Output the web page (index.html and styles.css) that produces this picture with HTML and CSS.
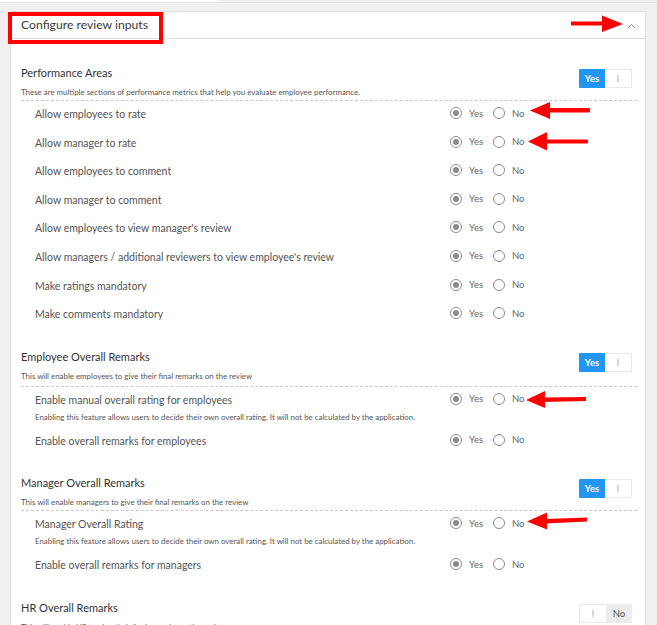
FILE: index.html
```html
<!DOCTYPE html>
<html lang="en">
<head>
<meta charset="utf-8">
<title>Configure review inputs</title>
<link rel="stylesheet" href="styles.css">
</head>
<body>
<div class="topbar"><div class="topbar-white"></div></div>
<div class="card">
  <div class="card-head">
    <h2 class="card-title">Configure review inputs</h2>
    <svg class="chevron" width="9" height="6" viewBox="0 0 9 6"><path d="M1 5 L4.5 1.5 L8 5" fill="none" stroke="#8a8a8a" stroke-width="1"/></svg>
  </div>
  <div class="card-body">
    <section class="group">
      <div class="group-head">
        <div class="group-info">
          <div class="group-title">Performance Areas</div>
          <div class="group-desc">These are multiple sections of performance metrics that help you evaluate employee performance.</div>
        </div>
        <div class="toggle"><span class="t-on">Yes</span><span class="t-off"><i class="t-bar"></i></span></div>
      </div>
      <div class="opts">
        <div class="opt"><div class="opt-text"><div class="opt-label">Allow employees to rate</div></div><div class="radios"><span class="radio"><i class="circle checked"></i>Yes</span><span class="radio"><i class="circle"></i>No</span></div></div>
        <div class="opt"><div class="opt-text"><div class="opt-label">Allow manager to rate</div></div><div class="radios"><span class="radio"><i class="circle checked"></i>Yes</span><span class="radio"><i class="circle"></i>No</span></div></div>
        <div class="opt"><div class="opt-text"><div class="opt-label">Allow employees to comment</div></div><div class="radios"><span class="radio"><i class="circle checked"></i>Yes</span><span class="radio"><i class="circle"></i>No</span></div></div>
        <div class="opt"><div class="opt-text"><div class="opt-label">Allow manager to comment</div></div><div class="radios"><span class="radio"><i class="circle checked"></i>Yes</span><span class="radio"><i class="circle"></i>No</span></div></div>
        <div class="opt"><div class="opt-text"><div class="opt-label">Allow employees to view manager's review</div></div><div class="radios"><span class="radio"><i class="circle checked"></i>Yes</span><span class="radio"><i class="circle"></i>No</span></div></div>
        <div class="opt"><div class="opt-text"><div class="opt-label">Allow managers / additional reviewers to view employee's review</div></div><div class="radios"><span class="radio"><i class="circle checked"></i>Yes</span><span class="radio"><i class="circle"></i>No</span></div></div>
        <div class="opt"><div class="opt-text"><div class="opt-label">Make ratings mandatory</div></div><div class="radios"><span class="radio"><i class="circle checked"></i>Yes</span><span class="radio"><i class="circle"></i>No</span></div></div>
        <div class="opt"><div class="opt-text"><div class="opt-label">Make comments mandatory</div></div><div class="radios"><span class="radio"><i class="circle checked"></i>Yes</span><span class="radio"><i class="circle"></i>No</span></div></div>
      </div>
    </section>

    <section class="group">
      <div class="group-head group-head--loose">
        <div class="group-info">
          <div class="group-title">Employee Overall Remarks</div>
          <div class="group-desc">This will enable employees to give their final remarks on the review</div>
        </div>
        <div class="toggle"><span class="t-on">Yes</span><span class="t-off"><i class="t-bar"></i></span></div>
      </div>
      <div class="opts">
        <div class="opt opt--desc"><div class="opt-text"><div class="opt-label">Enable manual overall rating for employees</div><div class="opt-desc">Enabling this feature allows users to decide their own overall rating. It will not be calculated by the application.</div></div><div class="radios"><span class="radio"><i class="circle checked"></i>Yes</span><span class="radio"><i class="circle"></i>No</span></div></div>
        <div class="opt"><div class="opt-text"><div class="opt-label">Enable overall remarks for employees</div></div><div class="radios"><span class="radio"><i class="circle checked"></i>Yes</span><span class="radio"><i class="circle"></i>No</span></div></div>
      </div>
    </section>

    <section class="group">
      <div class="group-head">
        <div class="group-info">
          <div class="group-title">Manager Overall Remarks</div>
          <div class="group-desc">This will enable managers to give their final remarks on the review</div>
        </div>
        <div class="toggle"><span class="t-on">Yes</span><span class="t-off"><i class="t-bar"></i></span></div>
      </div>
      <div class="opts">
        <div class="opt opt--desc"><div class="opt-text"><div class="opt-label">Manager Overall Rating</div><div class="opt-desc">Enabling this feature allows users to decide their own overall rating. It will not be calculated by the application.</div></div><div class="radios"><span class="radio"><i class="circle checked"></i>Yes</span><span class="radio"><i class="circle"></i>No</span></div></div>
        <div class="opt"><div class="opt-text"><div class="opt-label">Enable overall remarks for managers</div></div><div class="radios"><span class="radio"><i class="circle checked"></i>Yes</span><span class="radio"><i class="circle"></i>No</span></div></div>
      </div>
    </section>

    <section class="group">
      <div class="group-head">
        <div class="group-info">
          <div class="group-title">HR Overall Remarks</div>
          <div class="group-desc">This will enable HR to give their final remarks on the review</div>
        </div>
        <div class="toggle toggle--off"><span class="t-blank"><i class="t-bar"></i></span><span class="t-no">No</span></div>
      </div>
    </section>
  </div>
</div>

<div class="highlight"></div>
<svg class="arrows" width="657" height="625" viewBox="0 0 657 625">
  <g fill="#ff0000" stroke="none">
    <rect x="571" y="21.5" width="33" height="4"/>
    <polygon points="602,15.5 623,24 602,32"/>
    <polygon points="530,110.5 550,102 550,119"/>
    <rect x="548" y="108" width="42" height="4.5" rx="1"/>
    <polygon points="528,141.5 547,132 547,150.5"/>
    <rect x="545" y="139.5" width="43" height="4" rx="1"/>
    <polygon points="526,400 545,391 545,408"/>
    <polygon points="543,397.5 586,397 586,401 543,402"/>
    <polygon points="527,521.5 547,512.5 547,529.5"/>
    <polygon points="545,519 587,517.5 587,521.5 545,523.5"/>
  </g>
</svg>
</body>
</html>
```

FILE: styles.css
```css
* { box-sizing: border-box; }

html, body {
  margin: 0;
  padding: 0;
}

body {
  position: relative;
  width: 657px;
  height: 625px;
  overflow: hidden;
  background: #f0f0f0;
  font-family: Lato, "Open Sans", "Liberation Sans", sans-serif;
  color: #333;
}

.topbar {
  height: 3px;
  border-bottom: 1px solid #e6e6e6;
}

.topbar-white {
  width: 218px;
  height: 2px;
  background: #ffffff;
}

.card {
  margin: 8px 11px 0 10px;
  background: #fff;
  border: 1px solid #e0e0e0;
}

.card-head {
  height: 27px;
  display: flex;
  align-items: center;
  justify-content: space-between;
  padding: 0 9px 0 10px;
  border-bottom: 1px solid #e0e0e0;
}

.card-title {
  margin: 0;
  font-size: 12.2px;
  font-weight: 400;
  color: #3a3a3a;
  line-height: 16px;
}

.chevron {
  display: block;
  margin-top: 1px;
}

.card-body {
  padding: 7px 8px 0 10px;
}

.group {
  padding-top: 20px;
}

.group-head {
  display: flex;
  justify-content: space-between;
  align-items: flex-start;
  padding-bottom: 3px;
  border-bottom: 1px dashed #c8c8c8;
}

.group-head--loose {
  padding-bottom: 5px;
}

.group-title {
  font-size: 11px;
  line-height: 14px;
  color: #333;
}

.group-desc {
  margin-top: 7px;
  font-size: 7.9px;
  line-height: 10px;
  color: #555;
}

.toggle {
  display: flex;
  margin: 3px 5px 0 0;
  width: 53px;
  height: 19px;
  font-size: 9.5px;
}

.t-on {
  width: 26px;
  background: #2196f3;
  color: #fff;
  font-weight: 700;
  display: flex;
  align-items: center;
  justify-content: center;
  border-radius: 1px 0 0 1px;
}

.t-off,
.t-blank {
  flex: 1;
  display: flex;
  align-items: center;
  justify-content: center;
  border: 1px solid #e8e8e8;
  background: #fff;
}

.t-off { border-left: none; }

.t-blank { border-right: none; }

.t-bar {
  display: block;
  width: 2px;
  height: 7px;
  background: #d6d6d6;
}

.t-no {
  width: 26px;
  background: #ececec;
  color: #555;
  display: flex;
  align-items: center;
  justify-content: center;
}

.opt {
  display: grid;
  grid-template-columns: 1fr 187px;
  padding: 5px 0 7.6px 14px;
}

.opt--desc {
  padding-bottom: 6px;
}

.opt-label {
  font-size: 10.5px;
  line-height: 16px;
  color: #555;
}

.opt-desc {
  margin-top: 4px;
  font-size: 7.9px;
  line-height: 10px;
  color: #555;
}

.radios {
  display: flex;
  align-items: center;
  height: 14px;
  font-size: 9.5px;
  color: #666;
}

.radio {
  display: inline-flex;
  align-items: center;
  width: 43px;
}

.circle {
  display: inline-flex;
  align-items: center;
  justify-content: center;
  width: 12px;
  height: 12px;
  margin-right: 7px;
  border: 1px solid #8c8c8c;
  border-radius: 50%;
  background: #fff;
}

.circle.checked::after {
  content: "";
  width: 6px;
  height: 6px;
  border-radius: 50%;
  background: #8a8a8a;
}

.highlight {
  position: absolute;
  left: 8px;
  top: 12px;
  width: 155px;
  height: 32px;
  border: 4px solid #ff0000;
  pointer-events: none;
}

.arrows {
  position: absolute;
  left: 0;
  top: 0;
  pointer-events: none;
}
```
